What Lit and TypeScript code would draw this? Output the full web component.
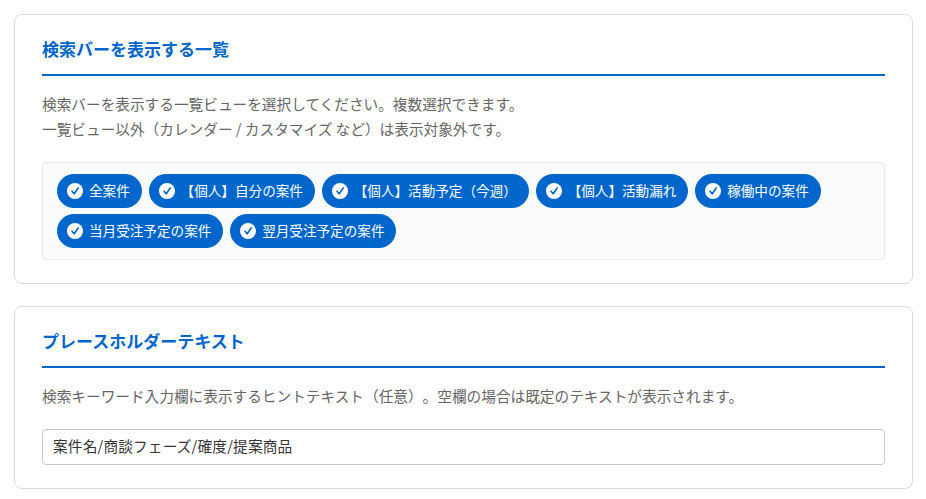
import { LitElement, html, css } from "lit";
import { customElement } from "lit/decorators.js";

const views = ["全案件", "【個人】自分の案件", "【個人】活動予定（今週）", "【個人】活動漏れ", "稼働中の案件", "当月受注予定の案件", "翌月受注予定の案件"];

@customElement("app-root")
export class AppRoot extends LitElement {
  static styles = css`
    :host { display: block; box-sizing: border-box; width: 926px; height: 499px; overflow: hidden; padding: 14px 13px 0 14px; background: #fff;
      font-family: "Noto Sans CJK JP", "Noto Sans", sans-serif; color: #666; font-size: 14.67px; text-spacing-trim: space-all; }
    * { box-sizing: border-box; }
    .card { border: 1px solid #dcdcdc; border-radius: 8px; padding: 27px 27px 23px; background: #fff; }
    .card + .card { margin-top: 22px; }
    .card.first { height: 270px; }
    .card.second { height: 183px; }
    h2 { margin: 0; height: 34px; border-bottom: 2px solid #0066cc; color: #0066cc; font-size: 17px; font-weight: 700; line-height: 14px; }
    .desc { margin: 15px 0 0; line-height: 25px; color: #666; }
    .panel { margin-top: 21px; height: 98px; border: 1px solid #e6ebf1; border-radius: 4px; background: #f9fbfd; padding: 11px 14px; display: flex; flex-wrap: wrap; gap: 6px 6.8px; align-content: flex-start; }
    .pill { height: 34px; border-radius: 17px; background: #0066cc; color: #fff; display: flex; align-items: center; gap: 6px; padding: 0 12px 2px 10px; font-size: 13.6px; white-space: nowrap; }
    .pill svg { width: 16px; height: 16px; flex: none; margin-top: 2px; }
    .input { margin-top: 21px; height: 36px; border: 1px solid #c8c8c8; border-radius: 4px; padding: 0 10px 4px; display: flex; align-items: center; color: #333; font-size: 14.67px; letter-spacing: 0.17px; }
  `;

  render() {
    return html`
      <section class="card first">
        <h2>検索バーを表示する一覧</h2>
        <p class="desc">検索バーを表示する一覧ビューを選択してください。複数選択できます。<br />一覧ビュー以外（カレンダー / カスタマイズ など）は表示対象外です。</p>
        <div class="panel">
          ${views.map((v) => html`<div class="pill">
            <svg viewBox="0 0 16 16"><circle cx="8" cy="8" r="8" fill="#fff"/><path d="M5 8.2 7.2 10.8 11.2 5" fill="none" stroke="#0066cc" stroke-width="1.6" stroke-linecap="round" stroke-linejoin="round"/></svg>
            <span>${v}</span></div>`)}
        </div>
      </section>
      <section class="card second">
        <h2>プレースホルダーテキスト</h2>
        <p class="desc">検索キーワード入力欄に表示するヒントテキスト（任意）。空欄の場合は既定のテキストが表示されます。</p>
        <div class="input">案件名/商談フェーズ/確度/提案商品</div>
      </section>`;
  }
}
